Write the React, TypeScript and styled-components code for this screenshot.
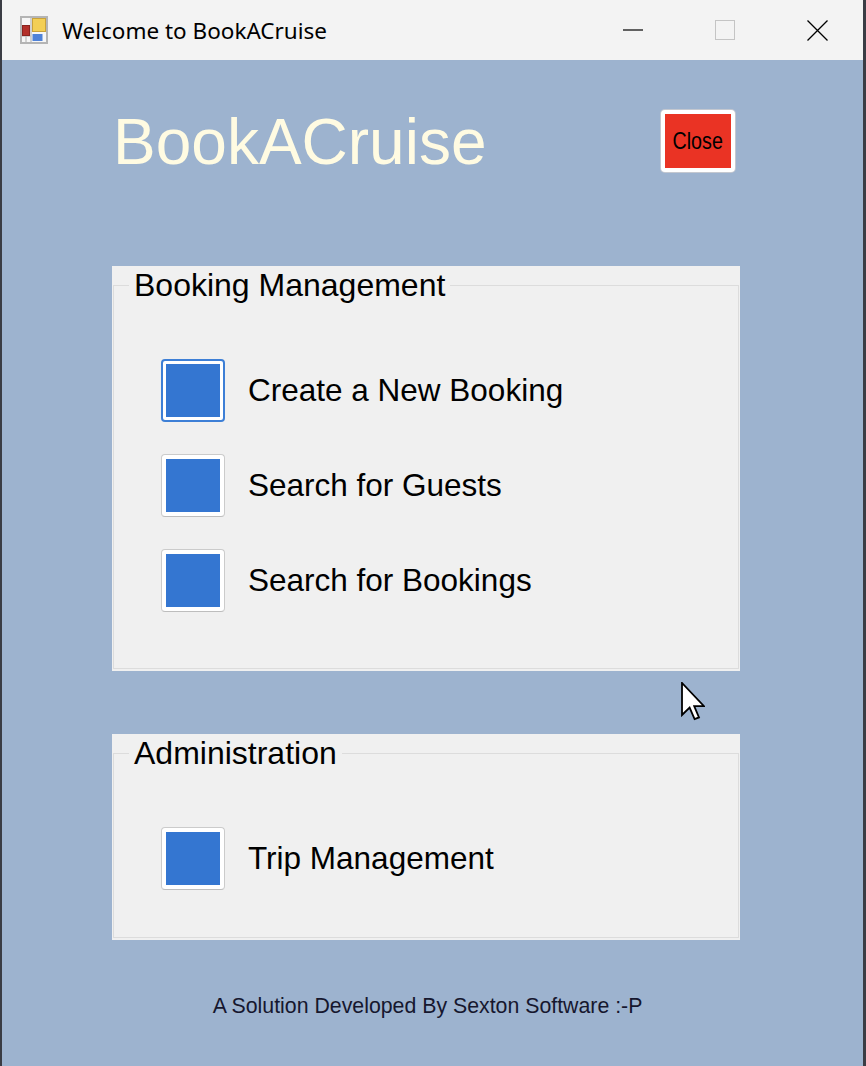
import React from "react";
import styled, { createGlobalStyle } from "styled-components";

const GlobalStyle = createGlobalStyle`
  html, body {
    margin: 0;
    padding: 0;
    background: #3a3c44;
    font-family: "Liberation Sans", Arial, sans-serif;
  }
  * { box-sizing: border-box; }
`;

const Window = styled.div`
  position: relative;
  width: 861px;
  height: 1066px;
  margin-left: 2px;
  display: flex;
  flex-direction: column;
  overflow: hidden;
`;

const TitleBar = styled.div`
  height: 60px;
  flex: none;
  background: #f3f3f3;
  display: flex;
  align-items: center;
  padding-left: 18px;
`;

const TitleText = styled.span`
  margin-left: 14px;
  font-family: "Segoe UI", "Noto Sans", "Open Sans", sans-serif;
  font-size: 22.5px;
  color: #000;
  flex: 1;
`;

const CaptionButton = styled.div`
  width: 92px;
  height: 60px;
  display: flex;
  align-items: center;
  justify-content: center;
`;

const ClientArea = styled.div`
  flex: 1;
  background: #9db3cf;
  padding-left: 110px;
`;

const Column = styled.div`
  width: 628px;
  display: flex;
  flex-direction: column;
`;

const Header = styled.div`
  margin-top: 46px;
  display: flex;
  justify-content: space-between;
  align-items: flex-start;
  padding-right: 5px;
`;

const AppTitle = styled.h1`
  margin: 0 0 0 1px;
  font-size: 64px;
  line-height: 72px;
  font-weight: normal;
  color: #fffbe2;
`;

const CloseButton = styled.button`
  margin-top: 4px;
  width: 74px;
  height: 62px;
  background: #ea3324;
  border: 4px solid #ffffff;
  border-radius: 4px;
  box-shadow: 0 0 0 1px #c4c8d0;
  padding: 0;
  display: flex;
  align-items: center;
  justify-content: center;
  cursor: pointer;
`;

const CloseLabel = styled.span`
  display: inline-block;
  font-family: "Liberation Sans", Arial, sans-serif;
  font-size: 24px;
  color: #000;
  transform: scaleX(0.82);
`;

const PanelBox = styled.div<{ $height: number; $top: number }>`
  margin-top: ${(p) => p.$top}px;
  height: ${(p) => p.$height}px;
  background: #f0f0f0;
  padding: 0 1px 2px 1px;
`;

const Group = styled.fieldset`
  margin: 0;
  height: 100%;
  border: 1px solid #dcdcdc;
  padding: 55px 0 0 0;
  min-width: 0;
`;

const Legend = styled.legend`
  margin-left: 15px;
  padding: 0 5px;
  font-size: 32px;
  line-height: 38px;
  color: #000;
`;

const Rows = styled.div`
  display: flex;
  flex-direction: column;
  gap: 32px;
  padding-left: 47px;
`;

const Row = styled.div`
  display: flex;
  align-items: center;
  gap: 23px;
`;

const TileButton = styled.button<{ $focused?: boolean }>`
  width: 64px;
  height: 63px;
  flex: none;
  padding: ${(p) => (p.$focused ? "3px" : "4px")};
  background: #ffffff;
  border: ${(p) => (p.$focused ? "2px solid #3d7fd6" : "1px solid #cbcbcb")};
  border-bottom-color: ${(p) => (p.$focused ? "#3d7fd6" : "#bdbdbd")};
  border-radius: 4px;
  cursor: pointer;
  display: flex;
`;

const TileFill = styled.span`
  flex: 1;
  background: #3476d1;
`;

const RowLabel = styled.span`
  font-size: 31.5px;
  color: #000;
`;

const Footer = styled.div`
  margin-top: 54px;
  padding-left: 3px;
  text-align: center;
  font-size: 21.3px;
  line-height: 24px;
  color: #16172e;
`;

const Pointer = styled.svg`
  position: absolute;
  left: 679px;
  top: 682px;
`;

const AppIcon = () => (
  <svg width="28" height="28" viewBox="0 0 28 28">
    <rect x="1" y="1" width="26" height="26" fill="#f6f6f6" stroke="#b4b4b4" strokeWidth="2" />
    <line x1="11" y1="2" x2="11" y2="26" stroke="#c4c4c4" strokeWidth="1.5" />
    <line x1="2" y1="20" x2="11" y2="20" stroke="#c4c4c4" strokeWidth="1.5" />
    <line x1="6" y1="20" x2="6" y2="26" stroke="#c4c4c4" strokeWidth="1.5" />
    <rect x="12.5" y="2.5" width="13" height="13" fill="#f3cf55" stroke="#c9a23a" strokeWidth="1" />
    <rect x="2.5" y="9.5" width="7" height="10" fill="#b3302a" stroke="#8a2420" strokeWidth="1" />
    <rect x="12.5" y="18" width="10" height="7" fill="#4f82d8" />
  </svg>
);

const items = [
  { label: "Create a New Booking", focused: true },
  { label: "Search for Guests" },
  { label: "Search for Bookings" },
];

export default function App() {
  return (
    <>
      <GlobalStyle />
      <Window>
        <TitleBar>
          <AppIcon />
          <TitleText>Welcome to BookACruise</TitleText>
          <CaptionButton>
            <svg width="20" height="2" viewBox="0 0 20 2">
              <line x1="0" y1="1" x2="20" y2="1" stroke="#000" strokeWidth="1.2" />
            </svg>
          </CaptionButton>
          <CaptionButton>
            <svg width="20" height="20" viewBox="0 0 20 20">
              <rect x="0.5" y="0.5" width="19" height="19" fill="none" stroke="#c4c4c4" strokeWidth="1" />
            </svg>
          </CaptionButton>
          <CaptionButton>
            <svg width="21" height="21" viewBox="0 0 21 21">
              <path d="M0.5 0.5 L20.5 20.5 M20.5 0.5 L0.5 20.5" stroke="#000" strokeWidth="1.3" />
            </svg>
          </CaptionButton>
        </TitleBar>
        <ClientArea>
          <Column>
            <Header>
              <AppTitle>BookACruise</AppTitle>
              <CloseButton>
                <CloseLabel>Close</CloseLabel>
              </CloseButton>
            </Header>
            <PanelBox $top={88} $height={405}>
              <Group>
                <Legend>Booking Management</Legend>
                <Rows>
                  {items.map((it) => (
                    <Row key={it.label}>
                      <TileButton $focused={it.focused}>
                        <TileFill />
                      </TileButton>
                      <RowLabel>{it.label}</RowLabel>
                    </Row>
                  ))}
                </Rows>
              </Group>
            </PanelBox>
            <PanelBox $top={63} $height={206}>
              <Group>
                <Legend>Administration</Legend>
                <Rows>
                  <Row>
                    <TileButton>
                      <TileFill />
                    </TileButton>
                    <RowLabel>Trip Management</RowLabel>
                  </Row>
                </Rows>
              </Group>
            </PanelBox>
            <Footer>A Solution Developed By Sexton Software :-P</Footer>
          </Column>
        </ClientArea>
        <Pointer width="24" height="40" viewBox="0 0 12 20">
          <path
            d="M0.5 0.5 L0.5 16.5 L4.3 12.8 L6.8 18.6 L9 17.7 L6.6 12.1 L11.5 12.1 Z"
            fill="#fff"
            stroke="#000"
            strokeWidth="0.9"
            strokeLinejoin="miter"
          />
        </Pointer>
      </Window>
    </>
  );
}
